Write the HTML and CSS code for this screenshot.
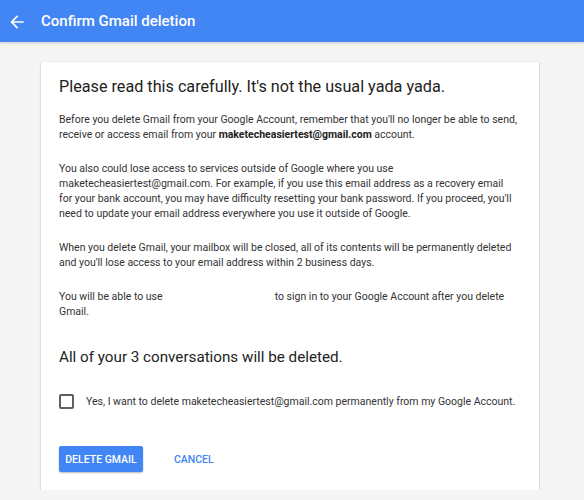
FILE: index.html
```html
<!DOCTYPE html>
<html lang="en">
<head>
<meta charset="utf-8">
<title>Confirm Gmail deletion</title>
<link rel="stylesheet" href="styles.css">
</head>
<body>
<header class="appbar">
  <span class="appbar-back" aria-label="Back">
    <svg viewBox="0 0 24 24" width="20" height="20"><path d="M20 11H7.83l5.59-5.59L12 4l-8 8 8 8 1.41-1.41L7.83 13H20v-2z" fill="#fff"/></svg>
  </span>
  <h1 class="appbar-title">Confirm Gmail deletion</h1>
</header>
<main class="page">
  <section class="card">
    <h2 class="card-heading">Please read this carefully. It's not the usual yada yada.</h2>
    <p class="copy">Before you delete Gmail from your Google Account, remember that you'll no longer be able to send, receive or access email from your <strong>maketecheasiertest@gmail.com</strong> account.</p>
    <p class="copy">You also could lose access to services outside of Google where you use maketecheasiertest@gmail.com. For example, if you use this email address as a recovery email for your bank account, you may have difficulty resetting your bank password. If you proceed, you'll need to update your email address everywhere you use it outside of Google.</p>
    <p class="copy">When you delete Gmail, your mailbox will be closed, all of its contents will be permanently deleted and you'll lose access to your email address within 2 business days.</p>
    <p class="copy">You will be able to use<span class="redacted"></span>to sign in to your Google Account after you delete Gmail.</p>
    <h2 class="card-heading card-heading--second">All of your 3 conversations will be deleted.</h2>
    <label class="confirm">
      <span class="checkbox"></span>
      <span class="confirm-text">Yes, I want to delete maketecheasiertest@gmail.com permanently from my Google Account.</span>
    </label>
    <div class="actions">
      <button class="btn btn-primary" type="button">Delete Gmail</button>
      <button class="btn btn-flat" type="button">Cancel</button>
    </div>
  </section>
</main>
</body>
</html>
```
FILE: styles.css
```css
* { box-sizing: border-box; }

body {
  margin: 0;
  background: #f5f5f5;
  font-family: Roboto, "Liberation Sans", Arial, sans-serif;
  color: #333;
}

.appbar {
  height: 42px;
  background: #4285f4;
  display: flex;
  align-items: center;
  box-shadow: 0 1px 3px rgba(0, 0, 0, 0.18);
}

.appbar-back {
  display: flex;
  margin-left: 7px;
  margin-top: 1px;
  width: 20px;
}

.appbar-title {
  margin: 0 0 0 14px;
  font-size: 15px;
  font-weight: 500;
  color: #fff;
}

.page {
  padding: 20px 0 0 41px;
}

.card {
  width: 498px;
  background: #fff;
  padding: 14px 20px 18px 18px;
  box-shadow: 0 1px 2px rgba(0, 0, 0, 0.22), 0 0 1px rgba(0, 0, 0, 0.12);
}

.card-heading {
  margin: 0 0 14px;
  font-size: 16.2px;
  line-height: 22px;
  font-weight: 400;
  color: #222;
}

.card-heading--second {
  font-size: 15.2px;
  margin: 27px 0 23px;
}

.copy {
  margin: 0 0 19px;
  font-size: 10.5px;
  line-height: 15px;
  color: #333;
}

.copy:last-of-type { margin-bottom: 0; }

.copy strong {
  font-weight: 700;
  color: #222;
}

.redacted {
  display: inline-block;
  width: 112px;
  height: 1px;
}

.confirm {
  display: flex;
  align-items: center;
  height: 20px;
  font-size: 10.5px;
  color: #333;
}

.checkbox {
  width: 15px;
  height: 15px;
  border: 2px solid #5f5f5f;
  border-radius: 2px;
  margin-right: 12px;
}

.actions {
  display: flex;
  align-items: center;
  margin-top: 35px;
}

.btn {
  font-family: inherit;
  font-size: 10.5px;
  font-weight: 500;
  text-transform: uppercase;
  border: 0;
  border-radius: 2px;
  height: 26px;
  padding: 0 6px;
}

.btn-primary {
  width: 84px;
  background: #4285f4;
  color: #fff;
  box-shadow: 0 1px 2px rgba(0, 0, 0, 0.28);
}

.btn-flat {
  margin-left: 25px;
  background: transparent;
  color: #4285f4;
}
```
